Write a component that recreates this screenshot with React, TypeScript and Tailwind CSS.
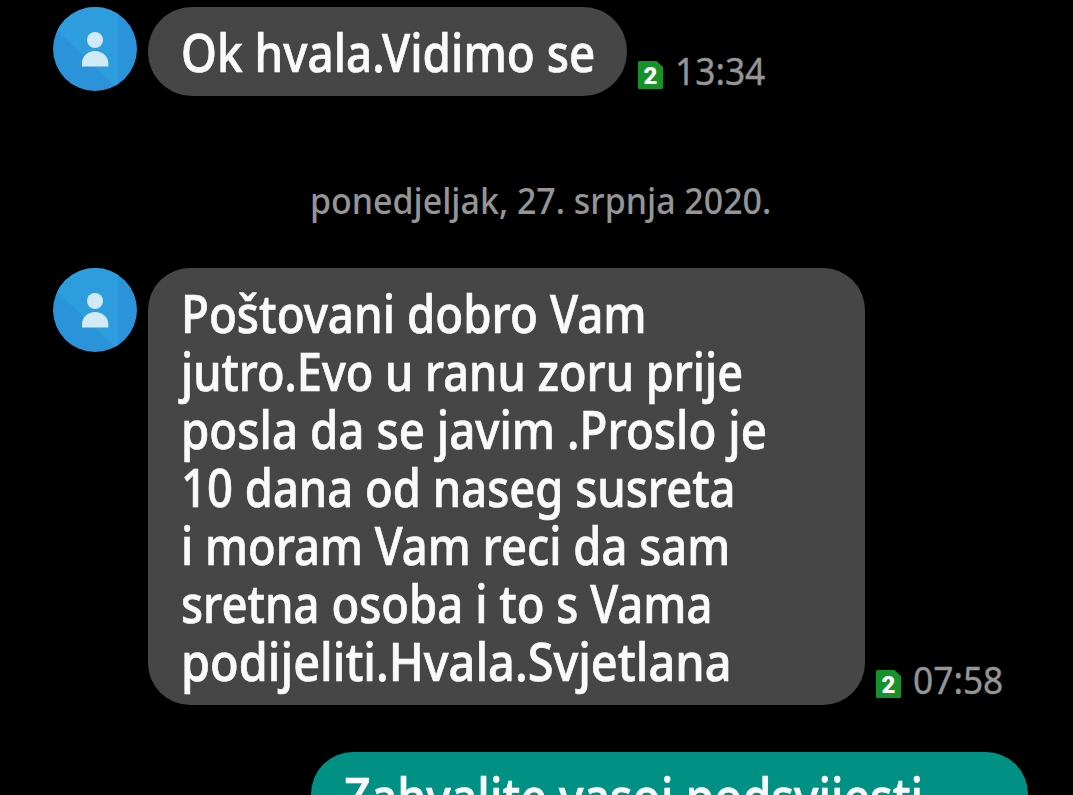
import React from 'react';

type Line = { text: string; fit: string };

const FIRST: Line[] = [{ text: 'Ok hvala.Vidimo se', fit: 'scale-x-[0.882]' }];

const SECOND: Line[] = [
  { text: 'Poštovani dobro Vam', fit: 'scale-x-[0.880]' },
  { text: 'jutro.Evo u ranu zoru prije', fit: 'scale-x-[0.868]' },
  { text: 'posla da se javim .Proslo je', fit: 'scale-x-[0.880]' },
  { text: '10 dana od naseg susreta', fit: 'scale-x-[0.873]' },
  { text: 'i moram Vam reci da sam', fit: 'scale-x-[0.873]' },
  { text: 'sretna osoba i to s Vama', fit: 'scale-x-[0.875]' },
  { text: 'podijeliti.Hvala.Svjetlana', fit: 'scale-x-[0.902]' },
];

const REPLY: Line[] = [{ text: 'Zahvalite vasoj podsvijesti', fit: 'scale-x-[0.893]' }];

const Avatar: React.FC = () => (
  <svg className="w-[84px] h-[84px] shrink-0 rounded-full" viewBox="0 0 84 84">
    <rect width="84" height="84" fill="#2b93d9" />
    <path d="M0 0H65V82L0 20Z" fill="#2d9ddd" />
    <circle cx="42" cy="33" r="8" fill="#d2e9f6" />
    <path d="M29 59.5V56C29 49 35 44 42 44S55.300 49 55.300 56V59.500Z" fill="#d2e9f6" />
  </svg>
);

const SimBadge: React.FC = () => (
  <div className="relative w-[25px] h-[28px] shrink-0">
    <svg className="absolute inset-0" width="25" height="28" viewBox="0 0 25 28">
      <path d="M1.500 0H18.500L25 6V26.500Q25 28 23.500 28H1.500Q0 28 0 26.500V1.500Q0 0 1.500 0Z" fill="#179129" />
    </svg>
    <span className="relative block pt-[3px] text-center font-['Roboto'] text-[24px] leading-[24px] font-black text-white">2</span>
  </div>
);

const Lines: React.FC<{ lines: Line[] }> = ({ lines }) => (
  <>
    {lines.map((line) => (
      <p key={line.text} className="h-[58px] whitespace-nowrap [-webkit-text-stroke:0.7px_#fafafa]">
        <span className={`inline-block origin-left ${line.fit}`}>{line.text}</span>
      </p>
    ))}
  </>
);

const Stamp: React.FC<{ time: string }> = ({ time }) => (
  <div className="flex items-end ml-[11px]">
    <SimBadge />
    <span className="ml-3 -mb-px h-10 text-[38px] leading-[40px] font-normal text-[#959595] whitespace-nowrap [-webkit-text-stroke:0.4px_#959595]">
      <span className="inline-block origin-left scale-x-[0.93]">{time}</span>
    </span>
  </div>
);

export default function App() {
  return (
    <div className="w-full h-[795px] overflow-hidden bg-black font-['Noto_Sans',sans-serif] text-[52px] leading-[58px] font-medium text-[#fafafa]">
      <div className="flex items-start pt-[7px] pl-[53px]">
        <Avatar />
        <div className="ml-[11px] w-[479px] h-[89px] shrink-0 rounded-[44px] bg-[#464646] pt-4 pl-[33px]">
          <Lines lines={FIRST} />
        </div>
        <div className="flex h-[82px] items-end">
          <Stamp time="13:34" />
        </div>
      </div>

      <div className="mt-[82px] h-[44px] pl-[310px] text-[37px] leading-[44px] font-medium text-[#959595] whitespace-nowrap">
        <span className="inline-block origin-left scale-x-[0.917]">ponedjeljak, 27. srpnja 2020.</span>
      </div>

      <div className="mt-[46px] flex items-start pl-[53px]">
        <Avatar />
        <div className="ml-[11px] w-[717px] h-[437px] shrink-0 rounded-[42px] bg-[#464646] pt-4 pl-[33px]">
          <Lines lines={SECOND} />
        </div>
        <div className="flex h-[430px] items-end">
          <Stamp time="07:58" />
        </div>
      </div>

      <div className="mt-[47px] ml-[311px] h-[160px] w-[717px] rounded-[42px] bg-[#009184] pt-[15px] pl-[33px]">
        <Lines lines={REPLY} />
      </div>
    </div>
  );
}
